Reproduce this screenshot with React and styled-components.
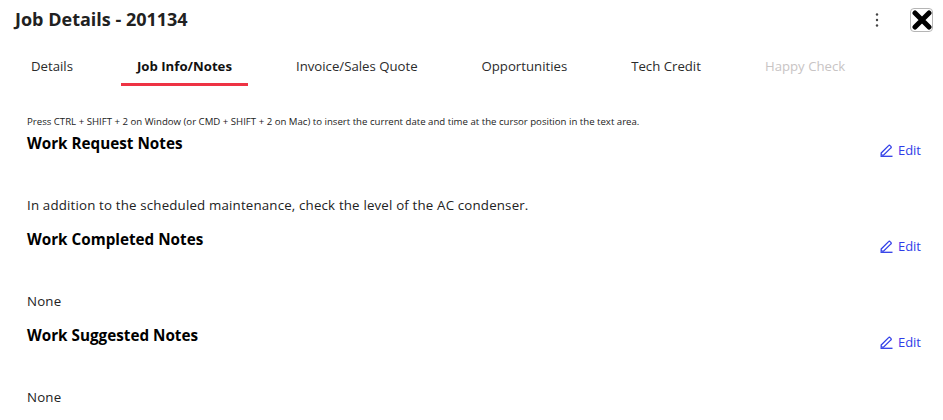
import React from "react";
import styled, { createGlobalStyle } from "styled-components";

const GlobalStyle = createGlobalStyle`
  html, body {
    margin: 0;
    padding: 0;
    background: #fff;
    font-family: "Open Sans", "Noto Sans", sans-serif;
    overflow: hidden;
  }
`;

const Page = styled.div`
  width: 943px;
  height: 420px;
  overflow: hidden;
  color: #000;
`;

const Header = styled.header`
  display: flex;
  align-items: center;
  height: 40px;
  padding: 0 10px 0 15px;
`;

const Title = styled.h1`
  flex: 1;
  margin: 0 0 2px;
  font-size: 18px;
  font-weight: 700;
  line-height: 38px;
  color: #212121;
`;

const MenuButton = styled.button`
  display: flex;
  width: 24px;
  height: 24px;
  padding: 0;
  margin-right: 21px;
  align-items: center;
  justify-content: center;
  background: none;
  border: 0;
  color: #333;
`;

const CloseButton = styled.button`
  display: flex;
  width: 23px;
  height: 24px;
  padding: 0;
  align-items: center;
  justify-content: center;
  background: #fff;
  border: 1px solid #b5b5b5;
  border-radius: 4px;
`;

const Tabs = styled.nav`
  display: flex;
  gap: 32px;
  height: 46px;
  padding-left: 15px;
`;

const Tab = styled.div`
  box-sizing: border-box;
  height: 46px;
  padding: 0 16px;
  border-bottom: ${(p) => (p.$active ? "3px solid #ee3344" : "3px solid transparent")};
  font-size: 13.2px;
  font-weight: ${(p) => (p.$active ? 700 : 400)};
  line-height: 53px;
  white-space: nowrap;
  color: ${(p) => (p.$disabled ? "#c8c4c4" : p.$active ? "#111" : "#2b2b2b")};
`;

const Content = styled.main`
  padding: 0 22px 0 27px;
`;

const Hint = styled.p`
  margin: 29px 0 0;
  font-size: 9.63px;
  line-height: 13px;
  color: #222;
`;

const Section = styled.section`
  box-sizing: border-box;
  height: 96px;
  padding-top: 4px;
`;

const SectionHead = styled.div`
  display: flex;
  justify-content: space-between;
  height: 64px;
`;

const SectionTitle = styled.h2`
  margin: 0;
  font-size: 15.25px;
  font-weight: 700;
  line-height: 22px;
`;

const EditLink = styled.a`
  display: flex;
  align-items: center;
  gap: 5px;
  height: 18px;
  margin-top: 9px;
  font-size: 13px;
  color: #2f3de8;
`;

const NoteText = styled.p`
  margin: 0;
  font-size: 13.3px;
  letter-spacing: 0.17px;
  line-height: 18px;
  color: #222;
`;

const notes = [
  { title: "Work Request Notes", body: "In addition to the scheduled maintenance, check the level of the AC condenser." },
  { title: "Work Completed Notes", body: "None" },
  { title: "Work Suggested Notes", body: "None" },
];

const tabs = ["Details", "Job Info/Notes", "Invoice/Sales Quote", "Opportunities", "Tech Credit", "Happy Check"];

function PencilIcon() {
  return (
    <svg width="13" height="13" viewBox="0 0 13 13" fill="none" stroke="#2f3de8" strokeWidth="1.3">
      <path d="M1.2 9 8.6 1.6a1 1 0 0 1 1.5 0l.8.8a1 1 0 0 1 0 1.5L3.5 11.2H1.2z" />
      <path d="M0.5 12.3h12" />
    </svg>
  );
}

export default function App() {
  return (
    <Page>
      <GlobalStyle />
      <Header>
        <Title>Job Details - 201134</Title>
        <MenuButton aria-label="More">
          <svg width="4" height="14" viewBox="0 0 4 14" fill="#444">
            <circle cx="2" cy="1.5" r="1.2" />
            <circle cx="2" cy="7" r="1.2" />
            <circle cx="2" cy="12.5" r="1.2" />
          </svg>
        </MenuButton>
        <CloseButton aria-label="Close">
          <svg width="20" height="20" viewBox="0 0 20 20" stroke="#000" strokeWidth="5" strokeLinecap="round">
            <path d="M3 3 17 17M17 3 3 17" />
          </svg>
        </CloseButton>
      </Header>
      <Tabs>
        {tabs.map((t) => (
          <Tab key={t} $active={t === "Job Info/Notes"} $disabled={t === "Happy Check"}>
            {t}
          </Tab>
        ))}
      </Tabs>
      <Content>
        <Hint>
          Press CTRL + SHIFT + 2 on Window (or CMD + SHIFT + 2 on Mac) to insert the current date and time at the cursor position in the text area.
        </Hint>
        {notes.map((n) => (
          <Section key={n.title}>
            <SectionHead>
              <SectionTitle>{n.title}</SectionTitle>
              <EditLink>
                <PencilIcon />
                Edit
              </EditLink>
            </SectionHead>
            <NoteText>{n.body}</NoteText>
          </Section>
        ))}
      </Content>
    </Page>
  );
}
